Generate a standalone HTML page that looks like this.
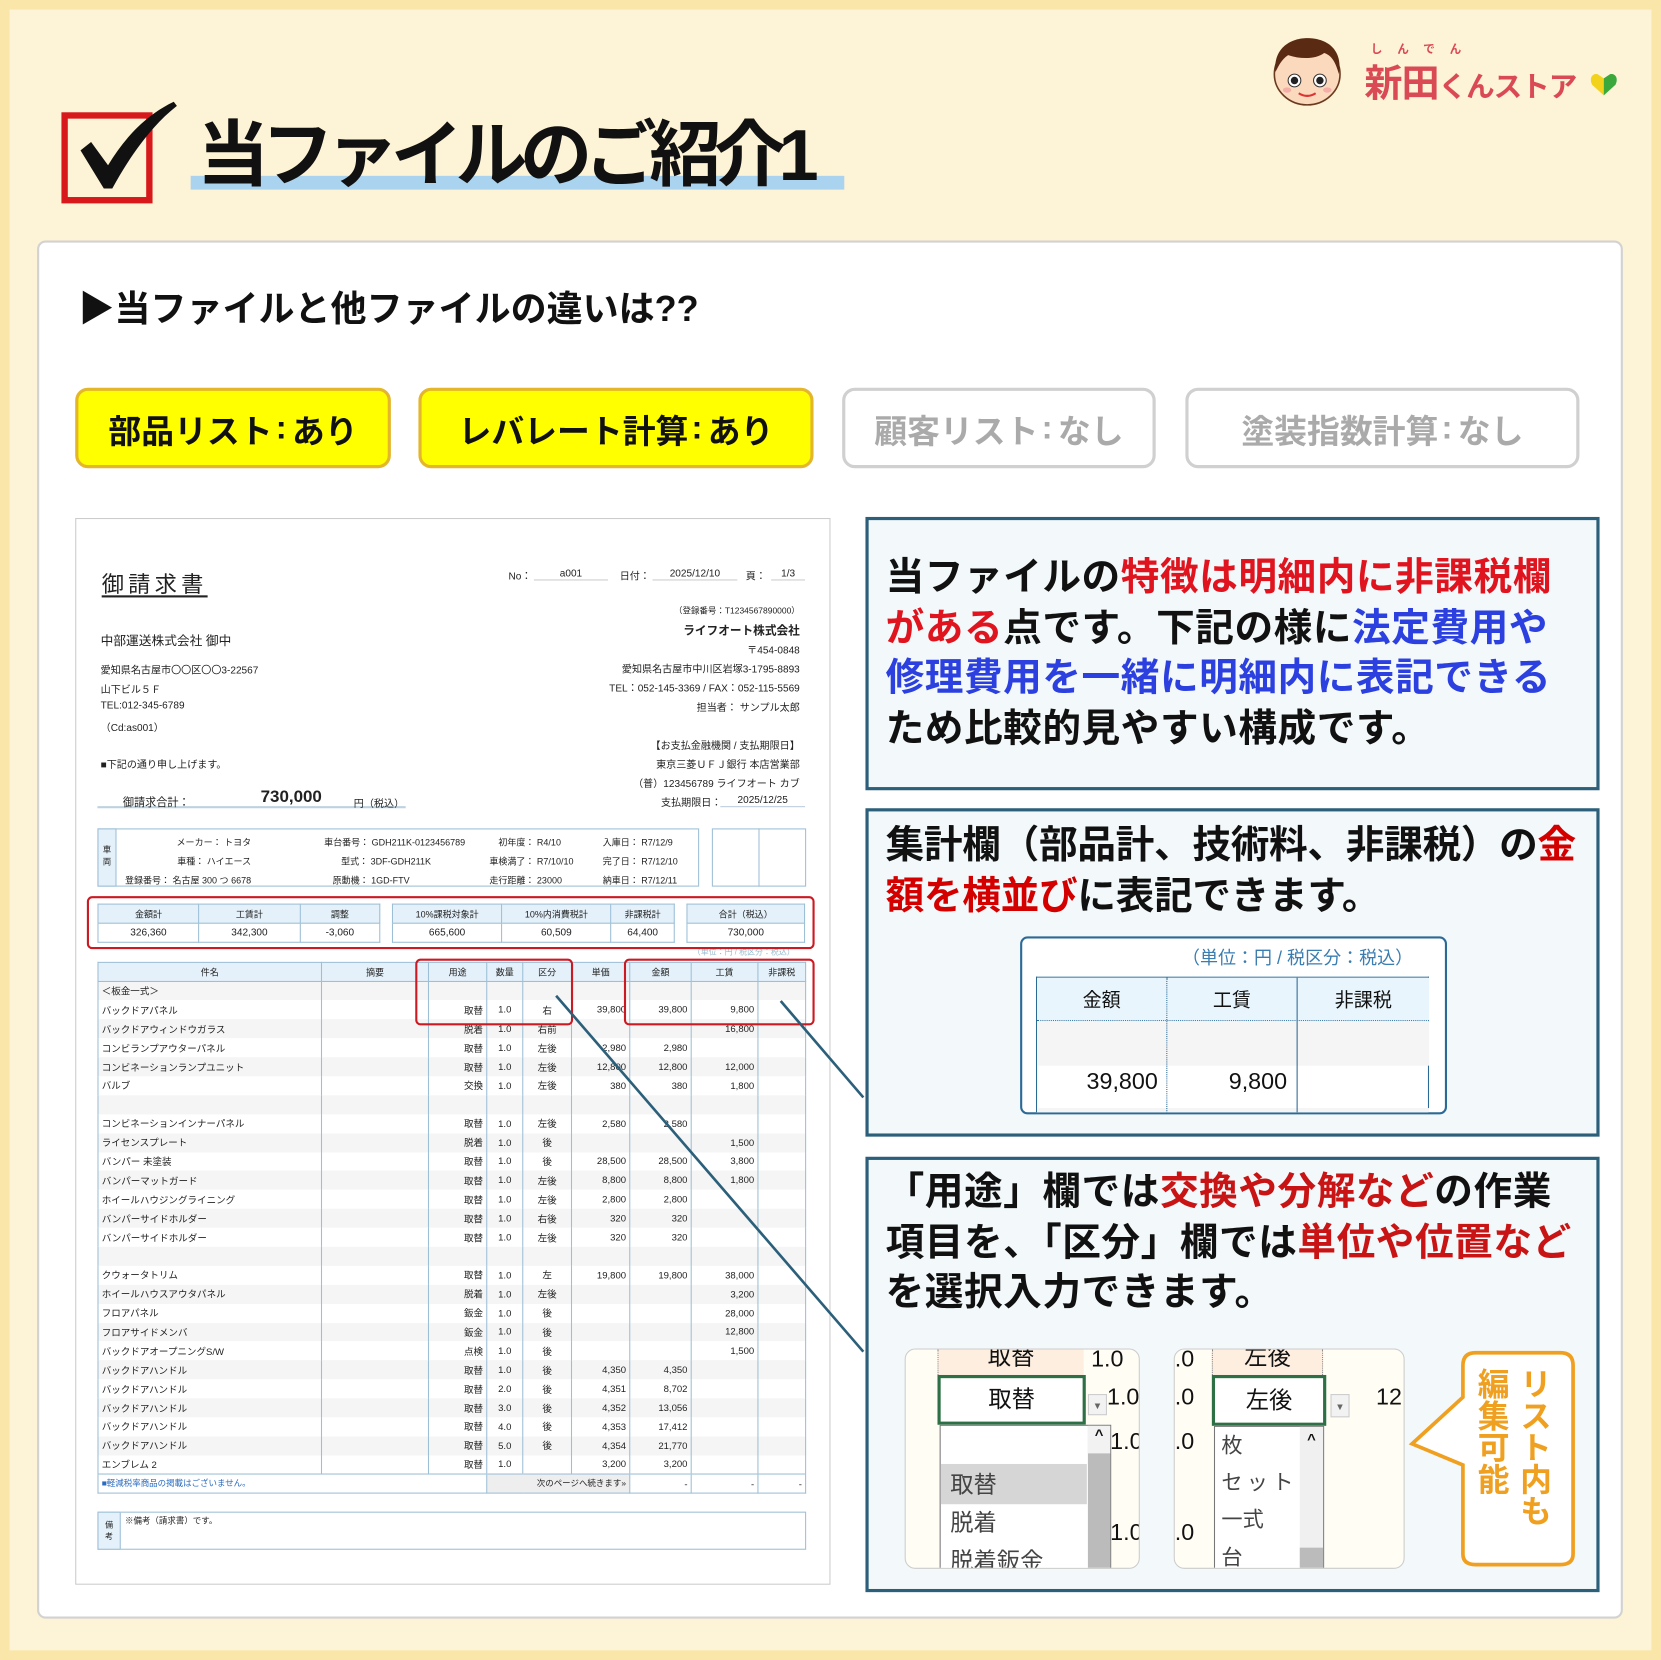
<!DOCTYPE html>
<html><head><meta charset="utf-8">
<style>
*{margin:0;padding:0;box-sizing:border-box}
html,body{width:1661px;height:1660px;overflow:hidden;background:#fdf3d6}
body{font-family:"Liberation Sans","Noto Sans CJK JP",sans-serif;color:#111}
#w{position:absolute;left:0;top:0;width:1568px;height:1567px;transform:scale(1.05931);transform-origin:0 0;background:#fdf3d6;box-shadow:inset 0 0 0 9px #f9e6a8}
.a{position:absolute;white-space:nowrap}
.btn{position:absolute;top:366px;height:76px;border-radius:12px;font-weight:bold;font-size:31px;display:flex;align-items:center;justify-content:center;letter-spacing:0}
.on{background:#ffff00;border:3px solid #e4b62a;color:#111}
.off{background:#fff;border:3px solid #d0d0d0;color:#aaa}
.pn{position:absolute;left:817px;width:693px;background:#f3f9fb;border:3px solid #2b5f7a}
.pt{position:absolute;left:16px;font-weight:bold;font-size:36.5px;line-height:47.5px;white-space:nowrap;letter-spacing:0.5px}
.r{color:#e0141e}.b{color:#2c40e0}
.inv{position:absolute;left:71px;top:489px;width:713px;height:1007px;background:#fff;border:1px solid #ccc;font-size:9.5px;color:#222}
.inv .a{font-size:9.5px}
table{border-collapse:collapse;position:absolute}
.t td{font-size:9px;height:17.9px;padding:0 3px;border-left:1px solid #9dbfd6;border-right:1px solid #9dbfd6;white-space:nowrap}
.t tr:nth-child(even) td{background:#f5f5f5}
.t th{font-size:8.5px;font-weight:normal;background:#e4f1fa;border:1px solid #9dbfd6;height:18px}
.s td{border:1px solid #9dbfd6;font-size:9.5px;text-align:center;height:18px}
.s tr:first-child td{background:#e4f1fa;font-size:8.5px}
.rt{text-align:right}.c{text-align:center}
.redb{position:absolute;border:2px solid #cc1a22;border-radius:5px}
.cl{font-family:"Liberation Sans",sans-serif;padding:0 5px 0 3px}
</style></head><body>
<div id="w">
<div class="a" style="left:58px;top:106px;width:86px;height:86px;border:6px solid #d7191c"></div>
<svg class="a" style="left:64px;top:90px" width="110" height="100" viewBox="0 0 110 100"><path d="M12 52 L22 44 L38 66 C55 38 75 18 100 6 L103 10 C80 28 60 55 42 88 L34 88 Z" fill="#111"/></svg>
<div class="a" style="left:180px;top:166px;width:617px;height:13px;background:#a9d3ee"></div>
<div class="a" style="left:186px;top:102px;font-size:68px;font-weight:bold;letter-spacing:-7px;line-height:90px">当ファイルのご紹介<span style="font-family:'Liberation Sans';letter-spacing:0">1</span></div>
<svg class="a" style="left:1198px;top:32px" width="72" height="70" viewBox="0 0 72 70"><ellipse cx="36" cy="38" rx="31" ry="29" fill="#fbd9bd" stroke="#6a3a1e" stroke-width="1.5"/><path d="M6 36 C4 12 22 4 36 4 C54 4 70 14 66 38 C62 24 58 20 52 18 C44 24 30 24 18 20 C12 24 9 30 6 36Z" fill="#5a2a12"/><circle cx="24" cy="44" r="6" fill="#fff" stroke="#333"/><circle cx="24" cy="44" r="3.5" fill="#222"/><circle cx="48" cy="44" r="6" fill="#fff" stroke="#333"/><circle cx="48" cy="44" r="3.5" fill="#222"/><path d="M28 56 Q36 61 44 56" stroke="#d33" stroke-width="2" fill="none"/><ellipse cx="17" cy="53" rx="4" ry="2.5" fill="#f4b0a8"/><ellipse cx="55" cy="53" rx="4" ry="2.5" fill="#f4b0a8"/></svg>
<div class="a" style="left:1294px;top:38px;font-size:11px;color:#d94a55;font-weight:bold;letter-spacing:14px">しんでん</div>
<div class="a" style="left:1288px;top:50px;font-size:36px;font-weight:bold;color:#d94a55;letter-spacing:-1px">新田<span style="font-size:27px">くんストア</span></div>
<svg class="a" style="left:1500px;top:66px" width="28" height="26" viewBox="0 0 28 26"><path d="M14 24 L3 14 C0 8 3 3 8 4 L14 8Z" fill="#f2d21a"/><path d="M14 24 L25 14 C28 8 25 3 20 4 L14 8Z" fill="#3aa83a"/></svg>
<div class="a" style="left:35px;top:227px;width:1497px;height:1301px;background:#fff;border:2px solid #d2d2d2;border-radius:8px"></div>
<div class="a" style="left:74px;top:268px;font-size:34px;font-weight:bold;line-height:48px">▶当ファイルと他ファイルの違いは??</div>
<div class="btn on" style="left:71px;width:298px">部品リスト<span class="cl">:</span>あり</div>
<div class="btn on" style="left:395px;width:373px">レバレート計算<span class="cl">:</span>あり</div>
<div class="btn off" style="left:795px;width:296px">顧客リスト<span class="cl">:</span>なし</div>
<div class="btn off" style="left:1119px;width:372px">塗装指数計算<span class="cl">:</span>なし</div>

<div class="inv">
<div class="a" style="left:24px;top:46px;font-size:21px;letter-spacing:4px;text-decoration:underline;text-underline-offset:3px">御請求書</div>
<div class="a" style="left:408px;top:46px">No：</div><div class="a" style="left:432px;top:46px;width:70px;text-align:center;border-bottom:1px solid #ccc">a001</div>
<div class="a" style="left:513px;top:46px">日付：</div><div class="a" style="left:544px;top:46px;width:80px;text-align:center;border-bottom:1px solid #ccc">2025/12/10</div>
<div class="a" style="left:632px;top:46px">頁：</div><div class="a" style="left:656px;top:46px;width:32px;text-align:center;border-bottom:1px solid #ccc">1/3</div>
<div class="a" style="right:28px;top:81px;font-size:8px">（登録番号：T1234567890000）</div>
<div class="a" style="right:28px;top:97px;font-size:11px;font-weight:bold">ライフオート株式会社</div>
<div class="a" style="right:28px;top:116px">〒454-0848</div>
<div class="a" style="right:28px;top:134px">愛知県名古屋市中川区岩塚3-1795-8893</div>
<div class="a" style="right:28px;top:152px">TEL：052-145-3369 / FAX：052-115-5569</div>
<div class="a" style="right:28px;top:170px">担当者： サンプル太郎</div>
<div class="a" style="right:28px;top:206px">【お支払金融機関 / 支払期限日】</div>
<div class="a" style="right:28px;top:224px">東京三菱ＵＦＪ銀行 本店営業部</div>
<div class="a" style="right:28px;top:242px">（普）123456789 ライフオート カブ</div>
<div class="a" style="left:552px;top:260px">支払期限日：</div><div class="a" style="left:608px;top:260px;width:80px;text-align:center;border-bottom:1px solid #bcd">2025/12/25</div>
<div class="a" style="left:23px;top:106px;font-size:12px">中部運送株式会社 御中</div>
<div class="a" style="left:23px;top:135px">愛知県名古屋市〇〇区〇〇3-22567</div>
<div class="a" style="left:23px;top:153px">山下ビル５Ｆ</div>
<div class="a" style="left:23px;top:171px">TEL:012-345-6789</div>
<div class="a" style="left:23px;top:189px">（Cd:as001）</div>
<div class="a" style="left:23px;top:224px">■下記の通り申し上げます。</div>
<div class="a" style="left:20px;top:247px;width:291px;height:26px;border-bottom:2px solid #bcd3df"></div>
<div class="a" style="left:44px;top:260px;font-size:10.5px">御請求合計：</div>
<div class="a" style="left:174px;top:254px;font-size:16px;font-weight:bold">730,000</div>
<div class="a" style="left:262px;top:261px">円（税込）</div>
<div class="a" style="left:20px;top:292px;width:568px;height:55px;border:1px solid #9dbfd6"></div>
<div class="a" style="left:20px;top:292px;width:18px;height:55px;background:#e4f1fa;border:1px solid #9dbfd6;font-size:8px;text-align:center;padding-top:14px;line-height:11px;white-space:normal">車<br>両</div>
<div class="a" style="left:46px;top:296px;font-size:8.5px;line-height:18px;text-align:right">メーカー： トヨタ<br>車種： ハイエース<br>登録番号： 名古屋 300 つ 6678</div>
<div class="a" style="left:234px;top:296px;font-size:8.5px;line-height:18px">車台番号： GDH211K-0123456789<br><span style="padding-left:16px">型式： 3DF-GDH211K</span><br><span style="padding-left:8px">原動機： 1GD-FTV</span></div>
<div class="a" style="left:390px;top:296px;font-size:8.5px;line-height:18px">　初年度： R4/10<br>車検満了： R7/10/10<br>走行距離： 23000</div>
<div class="a" style="left:497px;top:296px;font-size:8.5px;line-height:18px">入庫日： R7/12/9<br>完了日： R7/12/10<br>納車日： R7/12/11</div>
<div class="a" style="left:600px;top:292px;width:89px;height:55px;border:1px solid #9dbfd6"></div>
<div class="a" style="left:644px;top:292px;width:1px;height:55px;background:#9dbfd6"></div>
<table class="s" style="left:20px;top:363px;width:267px"><tr><td>金額計</td><td>工賃計</td><td>調整</td></tr><tr><td>326,360</td><td>342,300</td><td>-3,060</td></tr></table>
<table class="s" style="left:298px;top:363px;width:267px"><tr><td>10%課税対象計</td><td>10%内消費税計</td><td>非課税計</td></tr><tr><td>665,600</td><td>60,509</td><td>64,400</td></tr></table>
<table class="s" style="left:576px;top:363px;width:112px"><tr><td>合計（税込）</td></tr><tr><td>730,000</td></tr></table>
<div class="a" style="left:582px;top:403px;font-size:7.5px;color:#9bc">（単位：円 / 税区分：税込）</div>
<table class="t" style="left:20px;top:418px;width:669px">
<tr><th style="width:211px">件名</th><th style="width:101px">摘要</th><th style="width:55px">用途</th><th style="width:34px">数量</th><th style="width:46px">区分</th><th style="width:55px">単価</th><th style="width:58px">金額</th><th style="width:63px">工賃</th><th>非課税</th></tr>
<tr><td>＜板金一式＞</td><td></td><td></td><td></td><td></td><td></td><td></td><td></td><td></td></tr>
<tr><td>バックドアパネル</td><td></td><td class="rt">取替</td><td class="c">1.0</td><td class="c">右</td><td class="rt">39,800</td><td class="rt">39,800</td><td class="rt">9,800</td><td></td></tr>
<tr><td>バックドアウィンドウガラス</td><td></td><td class="rt">脱着</td><td class="c">1.0</td><td class="c">右前</td><td></td><td></td><td class="rt">16,800</td><td></td></tr>
<tr><td>コンビランプアウターパネル</td><td></td><td class="rt">取替</td><td class="c">1.0</td><td class="c">左後</td><td class="rt">2,980</td><td class="rt">2,980</td><td></td><td></td></tr>
<tr><td>コンビネーションランプユニット</td><td></td><td class="rt">取替</td><td class="c">1.0</td><td class="c">左後</td><td class="rt">12,800</td><td class="rt">12,800</td><td class="rt">12,000</td><td></td></tr>
<tr><td>バルブ</td><td></td><td class="rt">交換</td><td class="c">1.0</td><td class="c">左後</td><td class="rt">380</td><td class="rt">380</td><td class="rt">1,800</td><td></td></tr>
<tr><td></td><td></td><td></td><td></td><td></td><td></td><td></td><td></td><td></td></tr>
<tr><td>コンビネーションインナーパネル</td><td></td><td class="rt">取替</td><td class="c">1.0</td><td class="c">左後</td><td class="rt">2,580</td><td class="rt">2,580</td><td></td><td></td></tr>
<tr><td>ライセンスプレート</td><td></td><td class="rt">脱着</td><td class="c">1.0</td><td class="c">後</td><td></td><td></td><td class="rt">1,500</td><td></td></tr>
<tr><td>バンパー 未塗装</td><td></td><td class="rt">取替</td><td class="c">1.0</td><td class="c">後</td><td class="rt">28,500</td><td class="rt">28,500</td><td class="rt">3,800</td><td></td></tr>
<tr><td>バンパーマットガード</td><td></td><td class="rt">取替</td><td class="c">1.0</td><td class="c">左後</td><td class="rt">8,800</td><td class="rt">8,800</td><td class="rt">1,800</td><td></td></tr>
<tr><td>ホイールハウジングライニング</td><td></td><td class="rt">取替</td><td class="c">1.0</td><td class="c">左後</td><td class="rt">2,800</td><td class="rt">2,800</td><td></td><td></td></tr>
<tr><td>バンパーサイドホルダー</td><td></td><td class="rt">取替</td><td class="c">1.0</td><td class="c">右後</td><td class="rt">320</td><td class="rt">320</td><td></td><td></td></tr>
<tr><td>バンパーサイドホルダー</td><td></td><td class="rt">取替</td><td class="c">1.0</td><td class="c">左後</td><td class="rt">320</td><td class="rt">320</td><td></td><td></td></tr>
<tr><td></td><td></td><td></td><td></td><td></td><td></td><td></td><td></td><td></td></tr>
<tr><td>クウォータトリム</td><td></td><td class="rt">取替</td><td class="c">1.0</td><td class="c">左</td><td class="rt">19,800</td><td class="rt">19,800</td><td class="rt">38,000</td><td></td></tr>
<tr><td>ホイールハウスアウタパネル</td><td></td><td class="rt">脱着</td><td class="c">1.0</td><td class="c">左後</td><td></td><td></td><td class="rt">3,200</td><td></td></tr>
<tr><td>フロアパネル</td><td></td><td class="rt">鈑金</td><td class="c">1.0</td><td class="c">後</td><td></td><td></td><td class="rt">28,000</td><td></td></tr>
<tr><td>フロアサイドメンバ</td><td></td><td class="rt">鈑金</td><td class="c">1.0</td><td class="c">後</td><td></td><td></td><td class="rt">12,800</td><td></td></tr>
<tr><td>バックドアオープニングS/W</td><td></td><td class="rt">点検</td><td class="c">1.0</td><td class="c">後</td><td></td><td></td><td class="rt">1,500</td><td></td></tr>
<tr><td>バックドアハンドル</td><td></td><td class="rt">取替</td><td class="c">1.0</td><td class="c">後</td><td class="rt">4,350</td><td class="rt">4,350</td><td></td><td></td></tr>
<tr><td>バックドアハンドル</td><td></td><td class="rt">取替</td><td class="c">2.0</td><td class="c">後</td><td class="rt">4,351</td><td class="rt">8,702</td><td></td><td></td></tr>
<tr><td>バックドアハンドル</td><td></td><td class="rt">取替</td><td class="c">3.0</td><td class="c">後</td><td class="rt">4,352</td><td class="rt">13,056</td><td></td><td></td></tr>
<tr><td>バックドアハンドル</td><td></td><td class="rt">取替</td><td class="c">4.0</td><td class="c">後</td><td class="rt">4,353</td><td class="rt">17,412</td><td></td><td></td></tr>
<tr><td>バックドアハンドル</td><td></td><td class="rt">取替</td><td class="c">5.0</td><td class="c">後</td><td class="rt">4,354</td><td class="rt">21,770</td><td></td><td></td></tr>
<tr><td>エンブレム 2</td><td></td><td class="rt">取替</td><td class="c">1.0</td><td></td><td class="rt">3,200</td><td class="rt">3,200</td><td></td><td></td></tr>
<tr><td colspan="3" style="border-top:1px solid #9dbfd6;border-bottom:1px solid #9dbfd6;color:#2a6cc0;font-size:8px;background:#fff">■軽減税率商品の掲載はございません。</td><td colspan="3" class="rt" style="border:1px solid #9dbfd6;background:#eee;font-size:8px">次のページへ続きます»</td><td class="rt" style="border:1px solid #9dbfd6;background:#fff">-</td><td class="rt" style="border:1px solid #9dbfd6;background:#fff">-</td><td class="rt" style="border:1px solid #9dbfd6;background:#fff">-</td></tr>
</table>
<div class="a" style="left:20px;top:937px;width:669px;height:36px;border:1px solid #9dbfd6"></div>
<div class="a" style="left:20px;top:937px;width:22px;height:36px;background:#e4f1fa;border:1px solid #9dbfd6;font-size:7.5px;text-align:center;padding-top:6px;line-height:11px">備<br>考</div>
<div class="a" style="left:46px;top:940px;font-size:8px">※備考（請求書）です。</div>
</div>
<div class="redb" style="left:82px;top:846px;width:687px;height:50px"></div>
<div class="redb" style="left:392px;top:905px;width:149px;height:63px"></div>
<div class="redb" style="left:589px;top:905px;width:180px;height:63px"></div>
<svg class="a" style="left:0;top:0" width="1568" height="1567"><path d="M525 940 L815 1276" stroke="#2b5f7a" stroke-width="2.5"/><path d="M737 945 L815 1036" stroke="#2b5f7a" stroke-width="2.5"/></svg>

<div class="pn" style="top:488px;height:258px">
<div class="pt" style="top:30px">当ファイルの<span class="r">特徴は明細内に非課税欄</span><br><span class="r">がある</span>点です。下記の様に<span class="b">法定費用や</span><br><span class="b">修理費用を一緒に明細内に表記できる</span><br>ため比較的見やすい構成です。</div>
</div>
<div class="pn" style="top:763px;height:310px">
<div class="pt" style="top:8px;letter-spacing:-0.3px">集計欄（部品計、技術料、非課税）の<span class="r" style="color:#d40000">金</span><br><span class="r" style="color:#d40000">額を横並び</span>に表記できます。</div>
<div class="a" style="left:143px;top:118px;width:403px;height:168px;background:#fff;border:2px solid #2b6a96;border-radius:7px;overflow:hidden">
<div class="a" style="right:30px;top:4px;font-size:17px;color:#3a7db0">（単位：円 / 税区分：税込）</div>
<div class="a" style="left:13px;top:36px;width:371px;height:132px;border:1px solid #2b6a96;border-bottom:none;background:#fff"></div>
<div class="a" style="left:14px;top:37px;width:370px;height:41px;background:#e8f5fc;border-bottom:1px dotted #2b6a96"></div>
<div class="a" style="left:14px;top:78px;width:370px;height:42px;background:#f5f5f5"></div>
<div class="a" style="left:14px;top:160px;width:370px;height:10px;background:#f5f5f5"></div>
<div class="a" style="left:136px;top:37px;width:0;height:132px;border-left:1px dotted #2b6a96"></div>
<div class="a" style="left:259px;top:37px;width:1px;height:132px;background:#2b6a96"></div>
<div class="a" style="left:14px;top:44px;width:122px;text-align:center;font-size:18px">金額</div>
<div class="a" style="left:137px;top:44px;width:122px;text-align:center;font-size:18px">工賃</div>
<div class="a" style="left:260px;top:44px;width:124px;text-align:center;font-size:18px">非課税</div>
<div class="a" style="left:14px;top:122px;width:114px;text-align:right;font-size:22px">39,800</div>
<div class="a" style="left:137px;top:122px;width:113px;text-align:right;font-size:22px">9,800</div>
</div>
</div>
<div class="pn" style="top:1092px;height:411px">
<div class="pt" style="top:6px">「用途」欄では<span class="r" style="color:#c81414">交換や分解など</span>の作業<br>項目を、「区分」欄では<span class="r" style="color:#c81414">単位や位置など</span><br>を選択入力できます。</div>
<div class="a" style="left:34px;top:178px;width:222px;height:208px;background:#fffdf4;border:1px solid #ccc;border-radius:10px;overflow:hidden;font-size:22px">
<div class="a" style="left:30px;top:0;width:138px;height:24px;background:#fdeee0;border-left:1px dotted #888;text-align:center;line-height:14px">取替</div>
<div class="a" style="left:175px;top:-4px">1.0</div>
<div class="a" style="left:30px;top:24px;width:140px;height:47px;background:#fff;border:3px solid #2e7046;text-align:center;line-height:40px">取替</div>
<div class="a" style="left:172px;top:42px;width:18px;height:20px;background:#f2f2f2;border:1px solid #ccc;font-size:9px;text-align:center;line-height:20px;color:#666">▼</div>
<div class="a" style="left:190px;top:32px">1.0</div>
<div class="a" style="left:32px;top:71px;width:162px;height:140px;background:#fff;border:1px solid #777"></div>
<div class="a" style="left:172px;top:72px;width:21px;height:140px;background:#bbb"></div>
<div class="a" style="left:172px;top:72px;width:21px;height:26px;background:#f2f2f2;font-size:14px;text-align:center;font-weight:bold">^</div>
<div class="a" style="left:193px;top:74px">1.0</div>
<div class="a" style="left:193px;top:160px">1.0</div>
<div class="a" style="left:33px;top:108px;width:138px;height:38px;background:#d6d6d6"></div>
<div class="a" style="left:42px;top:110px;color:#444">取替</div>
<div class="a" style="left:42px;top:146px;color:#444">脱着</div>
<div class="a" style="left:42px;top:182px;color:#444">脱着鈑金</div>
</div>
<div class="a" style="left:288px;top:178px;width:218px;height:208px;background:#fffdf4;border:1px solid #ccc;border-radius:10px;overflow:hidden;font-size:22px">
<div class="a" style="left:0;top:-4px">.0</div>
<div class="a" style="left:35px;top:0;width:105px;height:24px;background:#fdeee0;border-left:1px dotted #888;border-right:1px dotted #888;text-align:center;line-height:14px">左後</div>
<div class="a" style="left:0;top:32px">.0</div>
<div class="a" style="left:35px;top:24px;width:108px;height:48px;background:#fff;border:3px solid #2e7046;text-align:center;line-height:42px">左後</div>
<div class="a" style="left:147px;top:42px;width:18px;height:22px;background:#f2f2f2;border:1px solid #ccc;font-size:9px;text-align:center;line-height:22px;color:#666">▼</div>
<div class="a" style="left:190px;top:32px">12</div>
<div class="a" style="left:0;top:74px">.0</div>
<div class="a" style="left:0;top:160px">.0</div>
<div class="a" style="left:37px;top:72px;width:104px;height:140px;background:#fff;border:1px solid #777"></div>
<div class="a" style="left:118px;top:73px;width:22px;height:140px;background:#f0f0f0"></div>
<div class="a" style="left:118px;top:187px;width:22px;height:20px;background:#bbb"></div>
<div class="a" style="left:118px;top:76px;width:22px;font-size:14px;text-align:center;font-weight:bold">^</div>
<div class="a" style="left:44px;top:74px;color:#444;font-size:20px">枚</div>
<div class="a" style="left:44px;top:109px;color:#444;font-size:20px;letter-spacing:4px">セット</div>
<div class="a" style="left:44px;top:144px;color:#444;font-size:20px">一式</div>
<div class="a" style="left:44px;top:180px;color:#444;font-size:20px">台</div>
</div>
<svg class="a" style="left:505px;top:176px" width="170" height="212" viewBox="0 0 170 212"><path d="M68 6 H148 Q160 6 160 18 V196 Q160 206 148 206 H68 Q56 206 56 196 V112 L8 92 L56 48 V18 Q56 6 68 6Z" fill="#fff" stroke="#f0a020" stroke-width="3.5"/></svg>
<div class="a" style="left:566px;top:196px;writing-mode:vertical-rl;font-size:30px;font-weight:bold;color:#f0a020;line-height:40px;height:180px">リスト内も<br>編集可能</div>
</div>
</div>
</body></html>
